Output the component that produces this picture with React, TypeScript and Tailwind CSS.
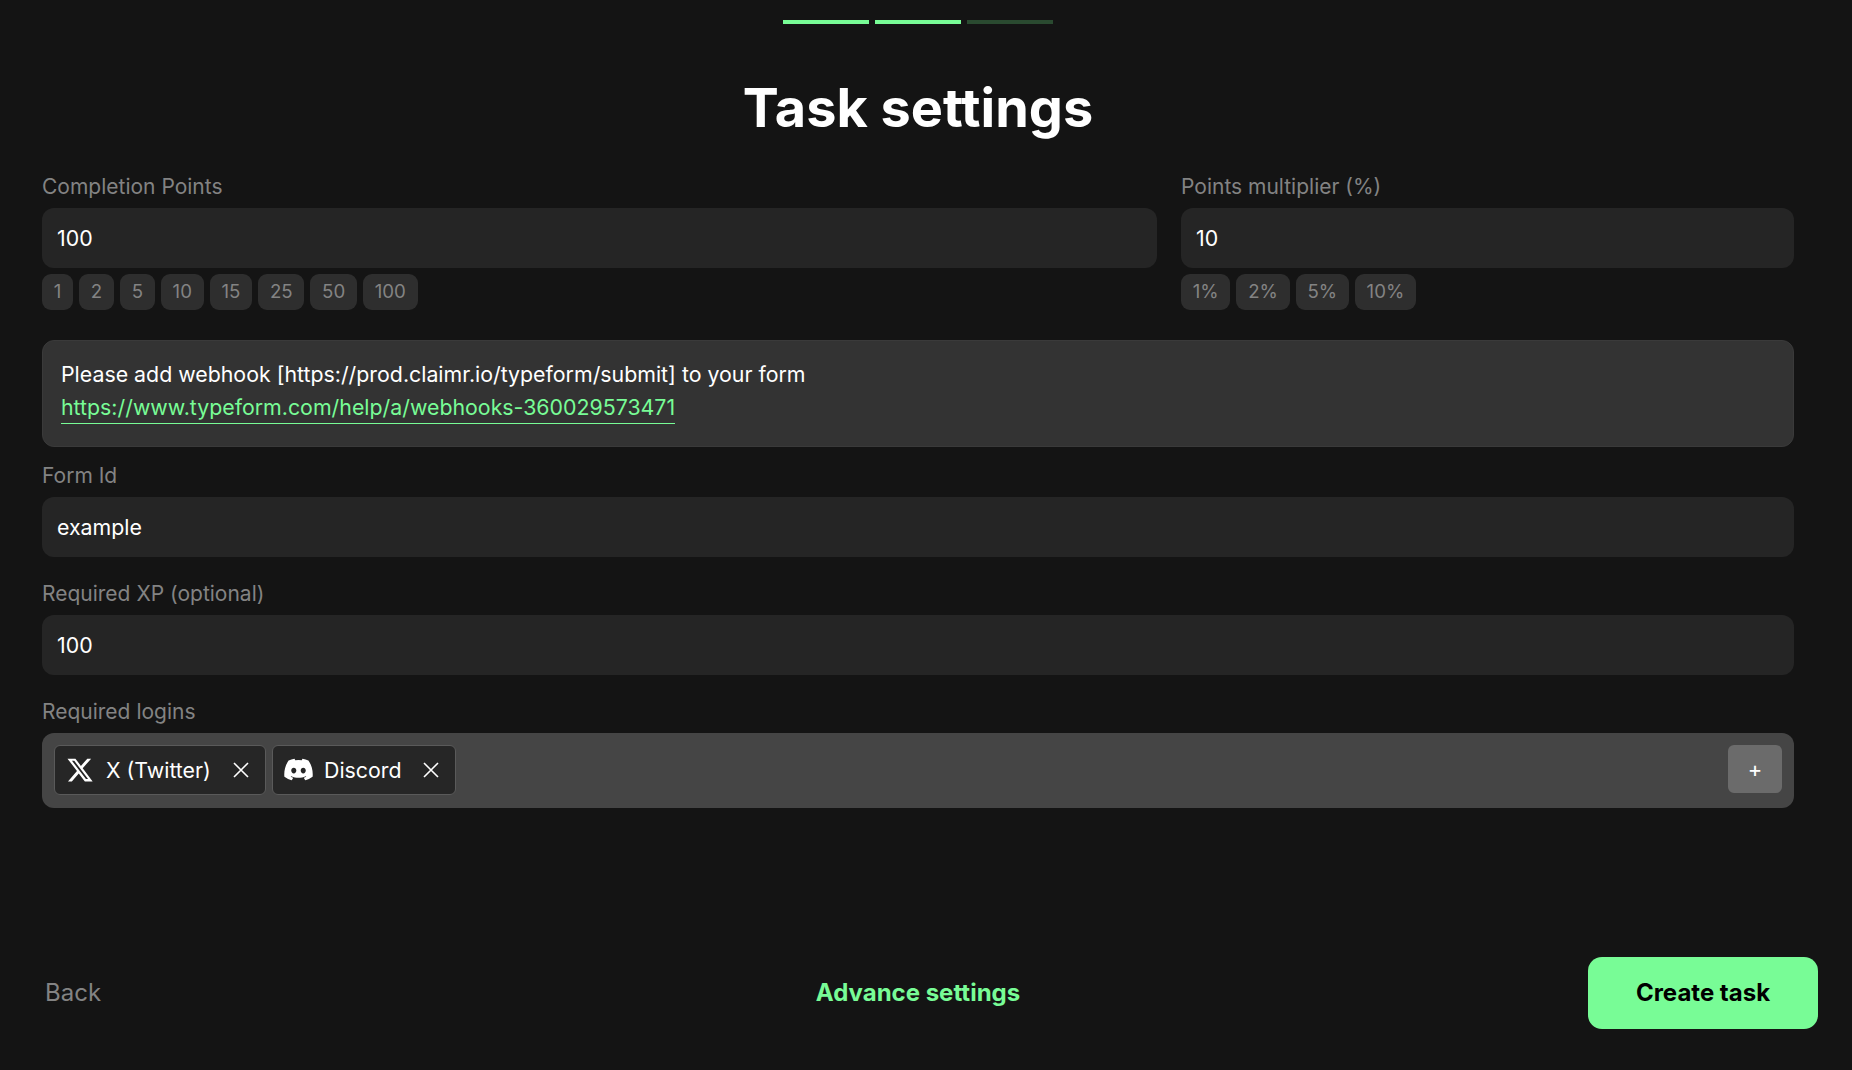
import React from 'react';
import { FaDiscord, FaXTwitter } from 'react-icons/fa6';

const pointOptions = ['1', '2', '5', '10', '15', '25', '50', '100'];
const multiplierOptions = ['1%', '2%', '5%', '10%'];

function Label({ children }: { children: React.ReactNode }) {
  return <div className="h-6 mb-[9px] text-[21px] leading-6 text-[#838383]">{children}</div>;
}

function Field({ value }: { value: string }) {
  return (
    <div className="h-[60px] flex items-center px-[15px] pt-[2px] rounded-[12px] bg-[#252525] text-[21.33px] text-white">
      {value}
    </div>
  );
}

function Chips({ options }: { options: string[] }) {
  return (
    <div className="flex gap-[6px] mt-[6px]">
      {options.map((option) => (
        <div
          key={option}
          className="h-9 px-[11.75px] flex items-center rounded-[9px] bg-[#2e2e2e] text-[18.67px] text-[#838383]"
        >
          {option}
        </div>
      ))}
    </div>
  );
}

function CloseIcon() {
  return (
    <svg width="18" height="18" viewBox="0 0 18 18" fill="none" stroke="white" strokeWidth="1.6">
      <path d="M2 2L16 16M16 2L2 16" />
    </svg>
  );
}

function LoginTag({ icon, name, width }: { icon: React.ReactNode; name: string; width: string }) {
  return (
    <div className={`h-[50px] ${width} pl-[11px] pr-[15px] flex items-center justify-between rounded-[6px] border border-[#5a5a5a] bg-[#262626] text-[21.33px] text-white`}>
      <div className="flex items-center gap-3">
        <div className="w-7 flex items-center justify-center">{icon}</div>
        <span className="pt-[2px]">{name}</span>
      </div>
      <CloseIcon />
    </div>
  );
}

export default function App() {
  return (
    <div className="w-full h-[1070px] bg-[#141414] font-['Inter',sans-serif]">
      <div className="w-[1800px] h-full ml-[18px] flex flex-col">
        {/* Progress */}
        <div className="flex justify-center gap-[6px] pt-5">
          <div className="w-[86px] h-1 bg-[#78fc96]" />
          <div className="w-[86px] h-1 bg-[#78fc96]" />
          <div className="w-[86px] h-1 bg-[#2a4a30]" />
        </div>

        <h1 className="mt-[50px] h-[68px] text-center text-[54px] leading-[68px] font-bold text-white">
          Task settings
        </h1>

        {/* Form */}
        <div className="mt-[33px] px-6">
          <div className="flex gap-6">
            <div className="flex-1">
              <Label>Completion Points</Label>
              <Field value="100" />
              <Chips options={pointOptions} />
            </div>
            <div className="w-[613px]">
              <Label>Points multiplier (%)</Label>
              <Field value="10" />
              <Chips options={multiplierOptions} />
            </div>
          </div>

          <div className="mt-[30px] h-[107px] px-[18px] pt-[17px] rounded-[12px] border border-[#3a3a3a] bg-[#333333] text-[21.33px] leading-[33px] text-white">
            <div>Please add webhook [https://prod.claimr.io/typeform/submit] to your form</div>
            <a className="inline-block h-[33px] border-b border-[#78fc96] text-[#78fc96]">
              https://www.typeform.com/help/a/webhooks-360029573471
            </a>
          </div>

          <div className="mt-[17px]">
            <Label>Form Id</Label>
            <Field value="example" />
          </div>

          <div className="mt-[25px]">
            <Label>Required XP (optional)</Label>
            <Field value="100" />
          </div>

          <div className="mt-[25px]">
            <Label>Required logins</Label>
            <div className="h-[75px] pl-[12px] pr-3 flex items-start pt-3 rounded-[12px] bg-[#454545]">
              <div className="flex gap-[6px]">
                <LoginTag icon={<FaXTwitter size={28} color="white" className="shrink-0" />} name="X (Twitter)" width="w-[212px]" />
                <LoginTag icon={<FaDiscord size={31} color="white" className="shrink-0" />} name="Discord" width="w-[184px]" />
              </div>
              <div className="ml-auto w-[54px] h-12 flex items-center justify-center rounded-[6px] bg-[#6b6b6b] text-[22px] text-white">
                +
              </div>
            </div>
          </div>
        </div>

        {/* Footer */}
        <div className="mt-auto mb-[41px] grid grid-cols-3 items-center">
          <div className="pl-[27px] text-[24px] text-[#838383]">Back</div>
          <div className="text-center text-[24px] font-bold text-[#78fc96]">Advance settings</div>
          <div className="flex justify-end">
            <div className="w-[230px] h-[72px] flex items-center justify-center rounded-[14px] bg-[#78fc96] text-[24px] font-bold text-black">
              Create task
            </div>
          </div>
        </div>
      </div>
    </div>
  );
}
